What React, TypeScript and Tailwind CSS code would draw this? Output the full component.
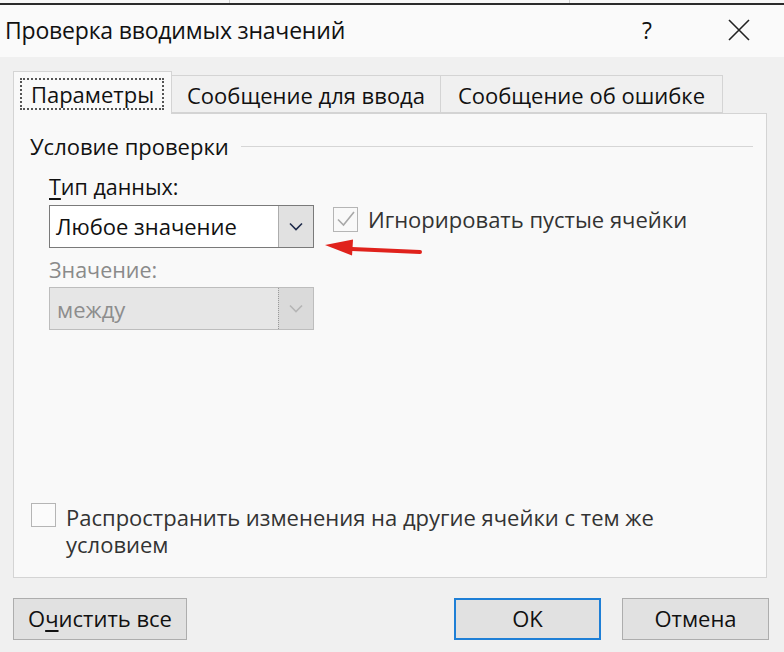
import React from "react";

const font = { fontFamily: "'Open Sans', 'Noto Sans', sans-serif" };

function Chevron({ color }: { color: string }) {
  return (
    <svg width="14" height="9" viewBox="0 0 14 9">
      <path d="M1 1.5 L7 7.5 L13 1.5" fill="none" stroke={color} strokeWidth="1.6" />
    </svg>
  );
}

function Check() {
  return (
    <svg width="20" height="18" viewBox="0 0 20 18">
      <path d="M2 9.5 L7.5 15 L18 2" fill="none" stroke="#a8a8a8" strokeWidth="1.6" />
    </svg>
  );
}

function Arrow() {
  return (
    <svg width="104" height="20" viewBox="0 0 104 20" className="absolute left-[322px] top-[238px]">
      <path d="M30 11 L98 14" stroke="#e0221c" strokeWidth="4" strokeLinecap="round" />
      <path d="M3 7 L31 1.5 L30 17.5 Z" fill="#e0221c" />
    </svg>
  );
}

export default function App() {
  return (
    <div
      className="relative w-[784px] h-[652px] bg-[#f0f0f0] flex flex-col overflow-hidden text-[#111]"
      style={font}
    >
      {/* top strip */}
      <div className="h-[5px] bg-[#f7f7f7] border-b-2 border-[#2b2b2b] flex">
        <div className="w-[230px] border-r border-[#cfcfcf]" />
        <div className="w-[340px] border-r border-[#cfcfcf]" />
      </div>

      {/* title bar */}
      <div className="h-[52px] bg-[#fafafa] flex items-center pl-[5px] pb-[2px]">
        <div className="text-[23px] tracking-[-0.2px] leading-none">Проверка вводимых значений</div>
        <div className="ml-auto w-[26px] text-center text-[23px] leading-none mr-[68px]">?</div>
        <svg width="22" height="22" viewBox="0 0 22 22" className="mr-[34px]">
          <path d="M1 1 L21 21 M21 1 L1 21" stroke="#222" strokeWidth="1.6" />
        </svg>
      </div>

      {/* body */}
      <div className="flex flex-col px-[13px] pt-[14px]">
        {/* tabs */}
        <div className="flex items-end h-[42px]">
          <div className="relative z-10 w-[159px] h-[43px] -mb-[1px] bg-[#f9f9f9] border border-b-0 border-[#d4d4d4] flex items-center justify-center pt-[2px]">
            <div className="absolute left-[6px] right-[7px] top-[6px] bottom-[4px] border-2 border-dotted border-[#555]" />
            <span className="text-[22px] leading-none">Параметры</span>
          </div>
          <div className="w-[269px] h-[38px] bg-[#f0f0f0] border border-l-0 border-[#d4d4d4] flex items-center justify-center pt-[2px]">
            <span className="text-[22px] leading-none">Сообщение для ввода</span>
          </div>
          <div className="w-[282px] h-[38px] bg-[#f0f0f0] border border-l-0 border-[#d4d4d4] flex items-center justify-center pt-[2px]">
            <span className="text-[22px] leading-none">Сообщение об ошибке</span>
          </div>
        </div>

        {/* panel */}
        <div className="w-[754px] h-[465px] bg-[#f9f9f9] border border-[#d4d4d4] flex flex-col pl-[16px]">
          <div className="flex items-center mt-[20px] h-[24px]">
            <span className="text-[22px] leading-none">Условие проверки</span>
            <div className="flex-1 h-px bg-[#d6d6d6] ml-[12px] mr-[13px]" />
          </div>

          <div className="ml-[19px] mt-[18px] text-[21.5px] leading-none">
            <span className="underline underline-offset-[3px]">Т</span>ип данных:
          </div>

          <div className="flex items-center mt-[7px]">
            <div className="ml-[19px] w-[265px] h-[43px] bg-white border border-[#7a7a7a] flex">
              <div className="flex-1 flex items-center pl-[6px] text-[22px] leading-none">Любое значение</div>
              <div className="w-[35px] bg-[#e1e1e1] border-l border-[#adadad] flex items-center justify-center">
                <Chevron color="#1e2a4a" />
              </div>
            </div>
            <div className="ml-[19px] -mt-[14px] w-[25px] h-[25px] border border-[#b5b5b5] bg-[#f9f9f9] flex items-center justify-center">
              <Check />
            </div>
            <span className="ml-[10px] -mt-[14px] text-[22px] leading-none text-[#333]">Игнорировать пустые ячейки</span>
          </div>

          <div className="ml-[19px] mt-[11px] text-[21.5px] leading-none text-[#8a8a8a]">Значение:</div>

          <div className="ml-[19px] mt-[7px] w-[265px] h-[43px] bg-[#e6e6e6] border border-[#bdbdbd] flex">
            <div className="flex-1 flex items-center pl-[7px] text-[22px] leading-none text-[#8d8d8d]">между</div>
            <div className="w-[35px] bg-[#dadada] border-l border-dotted border-[#9a9a9a] flex items-center justify-center">
              <Chevron color="#b5b5b5" />
            </div>
          </div>

          <div className="flex-1" />

          <div className="flex items-start mb-[19px] ml-[1px]">
            <div className="mt-[-1px] w-[25px] h-[24px] border border-[#b5b5b5] bg-[#fbfbfb] shrink-0" />
            <div className="ml-[10px] w-[610px] text-[22px] leading-[27px] text-[#333]">
              Распространить изменения на другие ячейки с тем же условием
            </div>
          </div>
        </div>

        {/* buttons */}
        <div className="flex mt-[20px]">
          <div className="w-[174px] h-[42px] bg-[#e1e1e1] border border-[#adadad] flex items-center justify-center text-[22px] leading-none pb-[3px]">
            О<span className="underline underline-offset-[3px]">ч</span>истить все
          </div>
          <div className="ml-auto w-[147px] h-[42px] bg-[#e1e1e1] border-2 border-[#1e7fd6] flex items-center justify-center text-[22px] leading-none pb-[3px]">
            OK
          </div>
          <div className="ml-[21px] mr-[2px] w-[147px] h-[42px] bg-[#e1e1e1] border border-[#adadad] flex items-center justify-center text-[22px] leading-none pb-[3px]">
            Отмена
          </div>
        </div>
      </div>

      <Arrow />
    </div>
  );
}
